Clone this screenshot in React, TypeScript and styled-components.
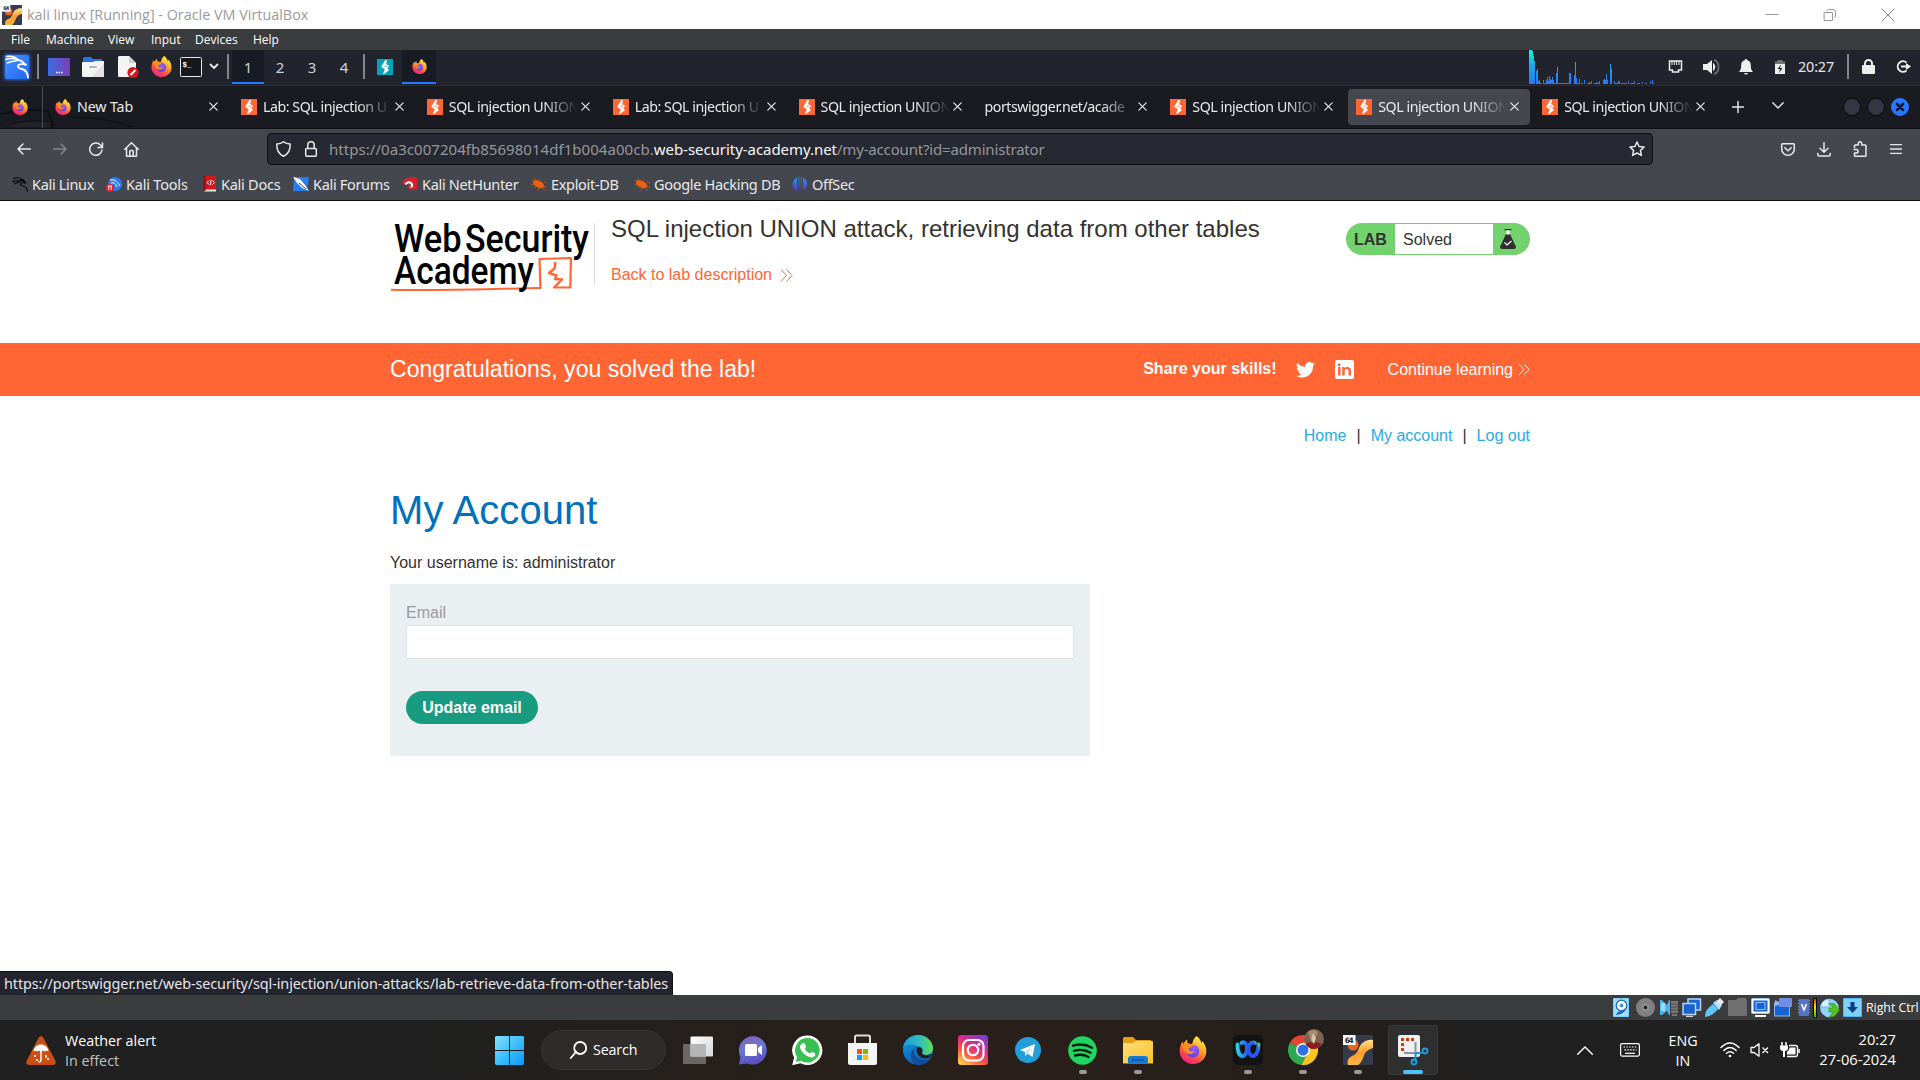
import React from 'react';
import styled, { createGlobalStyle, css } from 'styled-components';

const GlobalStyle = createGlobalStyle`
  * { box-sizing: border-box; }
  body { margin: 0; background: #fff; overflow: hidden; }
  svg { display: block; flex: none; overflow: visible; }
`;

const KALI = '"Noto Sans", sans-serif';
const WIN = '"Open Sans", "Noto Sans", sans-serif';
const PAGE = '"Liberation Sans", Arial, sans-serif';

const Desktop = styled.div`
  width: 1920px;
  height: 1080px;
  display: flex;
  flex-direction: column;
  overflow: hidden;
`;

const Row = styled.div`
  display: flex;
  align-items: center;
  flex: none;
  white-space: nowrap;
`;

const Item = styled.div<{ $ml?: number; $w?: number; $up?: number }>`
  flex: none;
  display: flex;
  align-items: center;
  margin-left: ${p => p.$ml ?? 0}px;
  margin-bottom: ${p => p.$up ?? 0}px;
  ${p => p.$w !== undefined && css`width: ${p.$w}px;`}
`;

/* ---------- host window ---------- */

const TitleBar = styled(Row)`
  height: 29px;
  padding-left: 2px;
  background: #fff;
  font: 14.4px ${WIN};
  color: #9b9b9b;
`;
const WindowTitle = styled.span`
  margin-left: 5px;
  letter-spacing: -0.01px;
`;
const WindowControls = styled.div`
  margin-left: auto;
  display: flex;
  align-items: center;
  gap: 46px;
  padding-right: 26px;
`;

const MenuBar = styled(Row)`
  height: 21px;
  padding: 0 0 0 11px;
  background: #3b3c3d;
  font: 12px ${WIN};
  color: #fff;
`;
const MenuEntry = styled.span<{ $w: number }>`
  width: ${p => p.$w}px;
`;

/* ---------- kali panel ---------- */

const Panel = styled(Row)`
  height: 36px;
  padding: 0 9px 2px 0;
  background: #22242d;
  border-bottom: 1px solid #2b2c31;
  font: 15px ${KALI};
  color: #cfd2d8;
`;
const Divider = styled.div<{ $ml: number }>`
  flex: none;
  width: 2px;
  height: 25px;
  margin-left: ${p => p.$ml}px;
  background: #85868b;
`;
const Workspace = styled.div<{ $active?: boolean; $w?: number }>`
  width: ${p => p.$w ?? 32}px;
  height: 34px;
  display: flex;
  align-items: center;
  justify-content: center;
  ${p => p.$active && css`
    background: #191b24;
    box-shadow: inset 0 -2px 0 #2777ff;
  `}
`;
const PanelRight = styled(Row)`
  margin-left: auto;
`;
const Clock = styled(Item)`
  font-size: 14.4px;
  letter-spacing: -0.15px;
  color: #e4e6ea;
`;

/* ---------- browser ---------- */

const TabStrip = styled(Row)`
  position: relative;
  height: 43px;
  background: #1a1b20;
  border-bottom: 1px solid #101114;
  padding-bottom: 1px;
`;
const Wallpaper = styled.svg`
  position: absolute;
  left: 0;
  bottom: 0;
`;
const PinnedTab = styled.div`
  position: relative;
  display: flex;
  align-items: center;
  width: 43px;
  height: 42px;
  padding-left: 12px;
  border-right: 1px solid #4b4c51;
  margin-right: 4px;
`;
const Tab = styled.div<{ $active?: boolean }>`
  position: relative;
  flex: none;
  width: 182px;
  height: 36px;
  margin-right: 3.9px;
  padding: 0 11px 0 8px;
  display: flex;
  align-items: center;
  gap: 6px;
  border-radius: 4px;
  background: ${p => (p.$active ? '#44474e' : 'transparent')};
`;
const TabLabel = styled.span<{ $fade?: boolean }>`
  flex: 1;
  min-width: 0;
  font: 14.2px/22px ${KALI};
  letter-spacing: ${p => (p.$fade ? -0.44 : -0.1)}px;
  color: #e9e9ea;
  margin-right: -3px;
  ${p => p.$fade && css`
    -webkit-mask-image: linear-gradient(90deg, #000 calc(100% - 34px), transparent);
    mask-image: linear-gradient(90deg, #000 calc(100% - 34px), transparent);
  `}
`;
const WindowDots = styled.div`
  margin-left: auto;
  display: flex;
  gap: 6px;
  padding-right: 11px;
`;
const Dot = styled.div<{ $close?: boolean }>`
  width: 18px;
  height: 18px;
  display: flex;
  align-items: center;
  justify-content: center;
  border-radius: 50%;
  border: 1px solid ${p => (p.$close ? '#2777ff' : '#0a0b0e')};
  background: ${p => (p.$close ? '#2777ff' : '#343846')};
`;

const NavBar = styled(Row)`
  height: 40px;
  padding-left: 17px;
  background: #44474e;
`;
const UrlBar = styled.div`
  width: 1386px;
  height: 32px;
  margin: 0 0 0 128px;
  padding: 0 7px 0 8px;
  display: flex;
  align-items: center;
  background: #272932;
  border: 1px solid #101116;
  border-radius: 4px;
  font: 15px ${KALI};
  color: #96979c;
`;
const UrlText = styled.span`
  width: 740px;
  margin-left: 12px;
  letter-spacing: 0.045px;
`;
const Host = styled.span`
  color: #f7f7f8;
  letter-spacing: -0.05px;
`;
const UrlPath = styled.span`
  letter-spacing: -0.17px;
`;
const BookmarkBar = styled(Row)`
  height: 32px;
  padding: 0 0 1px 12px;
  background: #44474e;
  border-bottom: 1px solid #0c0c10;
  font: 14.5px ${KALI};
  color: #e9e9ea;
`;
const Bookmark = styled.div<{ $w: number; $gap?: number; $ls?: number }>`
  width: ${p => p.$w}px;
  display: flex;
  align-items: center;
  gap: ${p => p.$gap ?? 4}px;
  letter-spacing: ${p => p.$ls ?? -0.32}px;
`;

/* ---------- page ---------- */

const Page = styled.main`
  position: relative;
  height: 794px;
  flex: none;
  background: #fff;
  font: 16px/20px ${PAGE};
  color: #333332;
`;
const Container = styled.div`
  width: 1140px;
  margin: 0 auto;
`;
const LabHeader = styled(Container)`
  height: 142px;
  display: flex;
  align-items: flex-start;
`;
const Logo = styled.div`
  margin: 15px 0 0 -2px;
  width: 205px;
`;
const HeaderRule = styled.div`
  width: 1px;
  height: 62px;
  margin: 22px 16px 0 1px;
  background: #dcdcdc;
`;
const LabTitle = styled.h2`
  margin: 14px 0 22px;
  font: 400 24px/28px ${PAGE};
  color: #333332;
`;
const BackLink = styled.a`
  display: flex;
  align-items: center;
  gap: 8px;
  color: #ff6633;
`;
const StatusPill = styled.div`
  margin: 22px 0 0 auto;
  width: 184px;
  height: 32px;
  display: flex;
  align-items: center;
  border-radius: 16px;
  background: #71d26e;
  padding-left: 8px;
`;
const PillTag = styled.b`
  width: 41px;
  padding-top: 2px;
`;
const PillState = styled.span`
  width: 98px;
  height: 30px;
  padding-left: 8px;
  line-height: 31px;
  background: #fff;
  margin-right: 7px;
`;
const Banner = styled.section`
  height: 53px;
  background: #ff6633;
  color: #fff;
`;
const BannerInner = styled(Container)`
  height: 53px;
  display: flex;
  align-items: center;
`;
const Congrats = styled.h4`
  margin: 0;
  font: 400 23.04px/27px ${PAGE};
`;
const Share = styled.b`
  margin: 0 19px 2px auto;
`;
const Continue = styled.a`
  display: flex;
  align-items: center;
  gap: 5px;
  margin-left: 34px;
`;
const TopLinks = styled(Container)`
  display: flex;
  justify-content: flex-end;
  gap: 10px;
  padding-top: 30px;
`;
const TopLink = styled.a`
  color: #29abe2;
`;
const Heading = styled.h1`
  margin: 40px 0 19px;
  font: 400 40px/48px ${PAGE};
  letter-spacing: 0.08px;
  color: #0071bc;
`;
const Username = styled.p`
  margin: 0 0 11px;
`;
const Form = styled.form`
  width: 700px;
  height: 172px;
  padding: 19px 16px;
  background: #eaeff2;
`;
const Label = styled.label`
  display: block;
  color: #999;
`;
const Input = styled.input`
  display: block;
  width: 100%;
  height: 34px;
  margin: 2px 0 32px;
  border: 1px solid #e0e2e3;
  background: #fff;
`;
const Submit = styled.button`
  display: block;
  width: 132px;
  height: 33px;
  padding: 0;
  border: 0;
  border-radius: 16.5px;
  background: #189b80;
  color: #fff;
  font: 700 16px/33px ${PAGE};
`;
const LinkStatus = styled.div`
  position: absolute;
  left: 0;
  bottom: 0;
  width: 673px;
  height: 24px;
  padding-left: 4px;
  border: solid #101116;
  border-width: 1px 1px 0 0;
  border-radius: 0 4px 0 0;
  background: #22242e;
  font: 14.4px/24px ${KALI};
  letter-spacing: -0.09px;
  color: #e6e6e8;
  white-space: nowrap;
`;

/* ---------- virtualbox status + taskbar ---------- */

const VmStatus = styled(Row)`
  height: 25px;
  justify-content: flex-end;
  background: #3b3c3e;
  padding-right: 2px;
  font: 12.4px ${WIN};
  letter-spacing: -0.05px;
  color: #fff;
`;
const Meter = styled.div`
  width: 4px;
  height: 20px;
  margin: 0 3px;
  border: 1px solid #000;
  background: linear-gradient(#ff2a00, #ffe000 45%, #22d000);
`;
const Taskbar = styled(Row)`
  height: 60px;
  background: linear-gradient(90deg, #202020 22%, #261f1a 42%, #2a201b 55%, #251e1a 65%, #202020 78%);
  font: 14.3px/20px ${WIN};
  color: #fff;
`;
const TwoLines = styled.div<{ $align?: string; $ml?: number; $w?: number; $top?: number }>`
  display: flex;
  flex-direction: column;
  text-align: ${p => p.$align ?? 'left'};
  margin-left: ${p => p.$ml ?? 0}px;
  padding-top: ${p => p.$top ?? 0}px;
  ${p => p.$w && css`width: ${p.$w}px;`}
`;
const Muted = styled.span`
  color: #c0c0c0;
`;
const SearchBox = styled.div`
  width: 125px;
  height: 40px;
  margin: 0 4.5px 0 17px;
  padding-left: 28px;
  display: flex;
  align-items: center;
  gap: 6px;
  border-radius: 20px;
  border: 1px solid #363432;
  background: #2d2c2a;
  letter-spacing: -0.15px;
`;
const AppButton = styled.div<{ $state?: 'open' | 'active' }>`
  position: relative;
  width: 50px;
  height: 50px;
  margin: 0 2.5px;
  display: flex;
  align-items: center;
  justify-content: center;
  border-radius: 4px;
  ${p => p.$state === 'active' && css`
    background: #2f2f30;
    box-shadow: inset 0 0 0 1px #3a3a3b;
  `}
  ${p => p.$state && css`
    &::after {
      content: '';
      position: absolute;
      bottom: 1px;
      width: ${p.$state === 'active' ? 20 : 8}px;
      height: 4px;
      border-radius: 2px;
      background: ${p.$state === 'active' ? '#4cc2ff' : '#9a9a9a'};
    }
  `}
`;
const TrayClock = styled(TwoLines)`
  margin-left: auto;
  padding-right: 24px;
  padding-bottom: 2px;
  font-size: 14.7px;
`;

/* ---------- icons ---------- */

const Line = ({ w, h, d, c = '#e9e9ea', sw = 1.5 }: { w: number; h: number; d: string; c?: string; sw?: number }) => (
  <svg width={w} height={h} viewBox={`0 0 ${w} ${h}`} fill="none" stroke={c} strokeWidth={sw} strokeLinecap="round" strokeLinejoin="round">
    <path d={d} />
  </svg>
);

const Firefox = ({ s }: { s: number }) => (
  <svg width={s} height={s} viewBox="0 0 32 32">
    <defs>
      <linearGradient id="ffBody" x1="0.8" y1="0" x2="0.25" y2="1">
        <stop offset="0.1" stopColor="#ffe43f" />
        <stop offset="0.45" stopColor="#ff9a26" />
        <stop offset="0.72" stopColor="#ff4a4c" />
        <stop offset="1" stopColor="#ec1a8c" />
      </linearGradient>
      <radialGradient id="ffGlobe" cx="0.6" cy="0.3" r="0.8">
        <stop offset="0" stopColor="#9a5cff" />
        <stop offset="1" stopColor="#5a3fd0" />
      </radialGradient>
    </defs>
    <path fill="url(#ffBody)" d="M20 0c3 2 5 5 5.500 8 1-.5 1.200-1.500 1-2.500 3 3.500 5 8 4.800 12.500C31 26 24.500 32 16 32 7.500 32 .8 25.500.8 17.500.8 12.500 2 9 4.200 6c0 1.200.2 2 .8 3C6 7 8 4.500 9.500 4c-.5 1.800 0 3.500 1 4.500 2 0 3.200.2 4.500 1C15.500 6 17 2.500 20 0z" />
    <circle cx="16" cy="17.500" r="7.200" fill="url(#ffGlobe)" />
    <path fill="#ff8d1f" d="M5 9c2.500-1 5-.8 6.500.2 2-.4 4 .4 4.800 1.500-.6 2-3 2.600-4.600 3-.8.900-.8 2.300.6 3.300 1.800 1 3.600 0 5.500.8-1.500 2.800-5.500 3.800-8.500 1.800C5.500 17.300 4.200 13 5 9z" />
  </svg>
);

const Bolt = ({ bg = '#ff6633' }: { bg?: string }) => (
  <svg width="16" height="16" viewBox="0 0 16 16">
    <rect width="16" height="16" fill={bg} />
    <path fill="#fff" d="M8.300 1H10L9.200 5.300 12.200 6.800 10.300 9.300 12 11 7.200 15H6L7.800 10.300 4.200 7.700z" />
    <path fill={bg} d="M8.200 6.300L10.200 7.300 9 8.600 7.200 7.700z" opacity="0.55" />
  </svg>
);

const Dragon = ({ w, h, c }: { w: number; h: number; c: string }) => (
  <svg width={w} height={h} viewBox="0 0 24 24" fill="none" stroke={c} strokeWidth="1.700" strokeLinecap="round">
    <path d="M2 4.500C6 2 11 2.500 14 5M1 8.500c4-2 8-1.500 12-1.200M4 12c2-2 4-3 7-3.200M13 6c3 .5 5 2 6.500 4.500-2-1-4-.8-6 0-2 1-1 3.500 2 4.200 4 .8 7 3 7.500 8.300" />
    <path d="M14 5.500c2.500.2 4 1.200 5 3" strokeWidth="2.600" />
  </svg>
);

const KaliMenu = () => (
  <svg width="34" height="34" viewBox="0 0 34 34">
    <defs>
      <linearGradient id="kali" x2="1" y2="1"><stop stopColor="#4a93ff" /><stop offset="1" stopColor="#1f66f0" /></linearGradient>
      <filter id="glow" x="-30%" y="-30%" width="160%" height="160%"><feGaussianBlur stdDeviation="1.600" /></filter>
    </defs>
    <rect x="4" y="4" width="26" height="26" rx="3" fill="#2777ff" opacity="0.8" filter="url(#glow)" />
    <rect x="5" y="5" width="24" height="24" rx="2" fill="url(#kali)" />
    <g fill="none" stroke="#fff" strokeWidth="1.500" strokeLinecap="round">
      <path d="M7 6.500c4-.5 8 .5 11 3M6 9.500c4-1.500 8-1 12 .5M7.500 13c2.500-1.500 5-2 8.500-2" />
      <path d="M17 10c3 0 5 .5 7 3.500l2.500 1.500c-3-1-6-1.500-8 0-1.500 2 .5 3.500 3.500 4 3.500.8 5.500 3 6 8.500" strokeWidth="1.900" />
    </g>
  </svg>
);

const Chevrons = ({ c, w = 13, h = 13 }: { c: string; w?: number; h?: number }) => (
  <svg width={w} height={h} viewBox="0 0 13 13" fill="none" stroke={c} strokeWidth="1"><path d="M1 .5l5.500 6L1 12.500M6.500.5l5.500 6-5.500 6" /></svg>
);

const VBox = ({ s }: { s: number }) => (
  <svg width={s} height={s} viewBox="0 0 30 30">
    <defs><linearGradient id="vb" x1="1" y2="1"><stop stopColor="#ffe08a" /><stop offset="0.5" stopColor="#ff9d2a" /><stop offset="1" stopColor="#ffb648" /></linearGradient></defs>
    <rect width="30" height="30" rx="1" fill="#363b4b" />
    <circle cx="10" cy="10" r="5.500" fill="#f2621b" />
    <path d="M30 5v8c-4 1-7 3-9 7-1 4-3 8-6 10H5c-1-4 0-7 4-9 3-1 5-3 7-8 2-5 7-9 14-8z" fill="url(#vb)" />
    <rect width="12.500" height="10" fill="#fff" />
    <text x="1.800" y="8" fontFamily="DejaVu Sans" fontWeight="700" fontSize="7.500" fill="#222" textLength="9">64</text>
  </svg>
);

const bars: [number, number, number][] = [
  [0, 34, 3], [3, 33, 1], [4, 28, 1], [5, 23, 1], [7, 13, 1], [8, 15, 1], [9, 3, 1], [10, 4, 1], [11, 1, 2], [14, 4, 1], [15, 1, 2], [17, 4, 1], [18, 7, 1], [19, 3, 1], [20, 8, 1], [21, 5, 1],
  [22, 4, 1], [23, 7, 1], [24, 4, 1], [25, 1, 2], [27, 11, 1], [28, 17, 1], [29, 1, 11], [40, 11, 2], [45, 9, 1], [46, 22, 1], [47, 6, 1], [48, 1, 2], [50, 5, 1], [52, 1, 2], [55, 4, 1],
  [58, 1, 4], [60, 2, 1], [62, 3, 1], [65, 1, 5], [67, 2, 1], [70, 3, 1], [74, 4, 1], [75, 5, 1], [76, 4, 1], [77, 10, 1], [78, 4, 1], [81, 20, 1], [82, 15, 1], [85, 3, 1], [86, 1, 3],
  [89, 3, 2], [92, 1, 6], [99, 3, 1], [101, 1, 4], [105, 3, 1], [108, 1, 3], [113, 2, 1], [116, 1, 2], [121, 3, 1], [123, 4, 1], [124, 1, 1],
];
const CpuGraph = () => (
  <svg width="125" height="34">
    <defs><linearGradient id="cpu" gradientUnits="userSpaceOnUse" x1="0" y1="0" x2="0" y2="34"><stop stopColor="#00ffd9" /><stop offset="0.45" stopColor="#1fa5e8" /><stop offset="1" stopColor="#2777ff" /></linearGradient></defs>
    {bars.map(([x, h, w]) => <rect key={x} x={x} y={34 - h} width={w} height={h} fill="url(#cpu)" />)}
  </svg>
);

const Bug = () => (
  <svg width="16" height="16" viewBox="0 0 16 16">
    <path d="M1 4l4 2M3 2l3 3M0 9l4-1M3 12l3-2M9 3l1 2M13 6l3 1M12 13l2 2M8 12l-1 3M13 11h3" stroke="#c9571f" strokeWidth="0.700" />
    <path d="M2 5.500c2-2 5-1.500 7 0 2 .3 4 2.500 4.500 5-2 2.500-5 2-7 .5C3.500 10 1.500 8 2 5.500z" fill="#ef6110" />
  </svg>
);

const tabs: { label: string; icon?: 'ff' | 'ps'; fade?: boolean; active?: boolean }[] = [
  { label: 'New Tab', icon: 'ff' },
  { label: 'Lab: SQL injection U', icon: 'ps', fade: true },
  { label: 'SQL injection UNION', icon: 'ps', fade: true },
  { label: 'Lab: SQL injection U', icon: 'ps', fade: true },
  { label: 'SQL injection UNION', icon: 'ps', fade: true },
  { label: 'portswigger.net/acade', fade: true },
  { label: 'SQL injection UNION', icon: 'ps', fade: true },
  { label: 'SQL injection UNION', icon: 'ps', fade: true, active: true },
  { label: 'SQL injection UNION', icon: 'ps', fade: true },
];

const WsaLogo = () => (
  <svg width="205" height="80" viewBox="388 216 205 80">
    <g fill="none" stroke="#ff6633" strokeLinejoin="round">
      <path d="M540.500 288.500L539.500 259 571 258 570.300 287.500H554" strokeWidth="2.200" />
      <path d="M555.500 262l-1 6.500-5.500 4.500 7.500 2.500-1.500 3.500 7 .5L553.500 288" strokeWidth="2.400" />
      <path d="M391 289.700c50 1.500 100-1 150-1.700" strokeWidth="2" />
    </g>
    <g fontFamily="Roboto, sans-serif" fontWeight="500" fontSize="39" fill="#000">
      <text x="394" y="252" textLength="67.500" lengthAdjust="spacingAndGlyphs">Web</text>
      <text x="465" y="252" textLength="124" lengthAdjust="spacingAndGlyphs">Security</text>
      <text x="394" y="284" textLength="140" lengthAdjust="spacingAndGlyphs">Academy</text>
    </g>
  </svg>
);

/* ---------- sections ---------- */

const HostWindow = () => (
  <>
    <TitleBar>
      <VBox s={20} />
      <WindowTitle>kali linux [Running] - Oracle VM VirtualBox</WindowTitle>
      <WindowControls>
        <Line w={12} h={12} c="#999" sw={1} d="M0 5.500H12" />
        <Line w={12} h={12} c="#999" sw={1} d="M.5 3.500h8v8h-8zM3 1.500q.5-1 1.500-1h4.500q2.500 0 2.500 2.500v4q0 1-1 1.500" />
        <Line w={12} h={12} c="#888" sw={1} d="M0 0L12 12M12 0L0 12" />
      </WindowControls>
    </TitleBar>
    <MenuBar>
      <MenuEntry $w={35}>File</MenuEntry>
      <MenuEntry $w={62}>Machine</MenuEntry>
      <MenuEntry $w={43}>View</MenuEntry>
      <MenuEntry $w={44}>Input</MenuEntry>
      <MenuEntry $w={58}>Devices</MenuEntry>
      <MenuEntry $w={40}>Help</MenuEntry>
    </MenuBar>
  </>
);

const KaliPanel = () => (
  <Panel>
    <KaliMenu />
    <Divider $ml={3} />
    <Item $ml={9} $w={22}>
      <svg width="22" height="18"><defs><linearGradient id="desk" x2="1"><stop stopColor="#3c6ee6" /><stop offset="1" stopColor="#7a3fb5" /></linearGradient></defs><rect width="22" height="18" rx="1" fill="url(#desk)" /><path d="M8 14.500h1.500M10.500 14.500H12M13 14.500h1.500" stroke="#fff" strokeWidth="1.500" /></svg>
    </Item>
    <Item $ml={12} $w={22}>
      <svg width="22" height="20"><path d="M1 1.500q0-1.500 1.500-1.500H9l2 2h9v6H1z" fill="#2d6fe8" /><path d="M0 5h11l2-1h9v15q0 1-1 1H1q-1 0-1-1z" fill="#f4f4f5" /><path d="M22 6v14H10z" fill="#e2e2e4" /><rect x="7" y="9" width="8" height="2" rx="1" fill="#b5b5b8" /></svg>
    </Item>
    <Item $ml={14} $w={21}>
      <svg width="21" height="22"><path d="M1 0h10l7 7v14H1q-1 0-1-1V1z" fill="#f4f4f5" /><path d="M11 0v7h7z" fill="#cfcfd2" /><circle cx="15" cy="16.500" r="5.600" fill="#d3181f" /><path d="M12.500 19l5-5" stroke="#fff" strokeWidth="1.800" /></svg>
    </Item>
    <Item $ml={11.5} $w={21}><Firefox s={21} /></Item>
    <Item $ml={8.5} $w={22}>
      <svg width="22" height="20"><rect x="0.500" y="0.500" width="21" height="19" rx="1" fill="#17181c" stroke="#e8e8e8" /><text x="2.500" y="9.500" fontFamily="Liberation Mono" fontWeight="700" fontSize="7.500" fill="#fff">$_</text></svg>
    </Item>
    <Item $ml={8} $w={10}><Line w={8} h={5} sw={1.8} d="M.5 .5L4 4 7.500 .5" /></Item>
    <Divider $ml={7} />
    <Item $ml={3}>
      <Workspace $active>1</Workspace>
      <Workspace>2</Workspace>
      <Workspace>3</Workspace>
      <Workspace>4</Workspace>
    </Item>
    <Divider $ml={3} />
    <Item $ml={12} $w={16}><Bolt bg="#00a3b9" /></Item>
    <Item $ml={9}><Workspace $active $w={34}><Firefox s={15} /></Workspace></Item>
    <PanelRight>
      <CpuGraph />
      <Item $ml={14} $w={15}><svg width="15" height="14" fill="none" stroke="#eee" strokeWidth="1.500"><path d="M1.500 1h12v9h-3v2h-6v-2h-3z" /><path d="M4 1v4M6.300 1v4M8.600 1v4M11 1v4" strokeWidth="1" /></svg></Item>
      <Item $ml={20} $w={17}><svg width="17" height="16"><path d="M0 5h4l5-4v14l-5-4H0z" fill="#eee" /><path d="M10.500 4.500q3 3.500 0 7z" fill="#eee" stroke="#eee" /><path d="M11 1c6 1.500 6 12.500 0 14" fill="none" stroke="#66686f" strokeWidth="2" /></svg></Item>
      <Item $ml={18} $w={16}><svg width="16" height="16"><path d="M8 0q1.200 0 1.300 1.300C12 2 12.800 4 12.800 6c0 4 .7 5 2.200 7H1c1.500-2 2.200-3 2.200-7 0-2 .8-4 3.500-4.700Q6.800 0 8 0zM6 14h4q-.5 1.500-2 1.500T6 14z" fill="#eee" /></svg></Item>
      <Item $ml={21} $w={10}><svg width="10" height="14"><rect x="2.500" width="5" height="2" fill="#777" /><rect y="1.500" width="10" height="3" fill="#777" /><rect y="4" width="10" height="10" fill="#eee" /><path d="M6 4.500L2.500 9H5l-1 4 3.500-5H5z" fill="#22242d" /></svg></Item>
      <Clock $ml={13} $w={36}>20:27</Clock>
      <Divider $ml={13} />
      <Item $ml={13} $w={13}><svg width="13" height="15"><rect y="6" width="13" height="9" rx="1" fill="#eee" /><path d="M3 7V4.500a3.500 3.500 0 017 0V7" fill="none" stroke="#eee" strokeWidth="2" /></svg></Item>
      <Item $ml={21} $w={15}><svg width="15" height="13" fill="none" stroke="#eee" strokeWidth="2"><path d="M10.500 2.500A5.300 5.300 0 1010.500 10.500M5 6.500h6" /><path d="M10 3l5 3.500-5 3.500z" fill="#eee" stroke="none" /></svg></Item>
    </PanelRight>
  </Panel>
);

const Browser = () => (
  <>
    <TabStrip>
      <Wallpaper width="160" height="20" viewBox="0 0 160 20" fill="none" stroke="#101115">
        <path d="M0 6c20-5 34-5 48-3l6 17" strokeWidth="2" />
        <path d="M12 16c12-3 24-4 38-2l2 6H4z" fill="#222329" strokeWidth="1" />
        <path d="M70 9c26 0 46 4 62 10" strokeWidth="1.500" />
      </Wallpaper>
      <PinnedTab><Firefox s={16} /></PinnedTab>
      {tabs.map((t, i) => (
        <Tab key={i} $active={t.active}>
          {t.icon === 'ff' && <Firefox s={16} />}
          {t.icon === 'ps' && <Bolt />}
          <TabLabel $fade={t.fade}>{t.label}</TabLabel>
          <Line w={9} h={9} sw={1.2} d="M.8 .8L8.200 8.200M8.200 .8L.8 8.200" />
        </Tab>
      ))}
      <Item $ml={12}><Line w={12} h={12} sw={1.4} d="M6 .5V11.500M.5 6H11.500" /></Item>
      <Item $ml={28} $up={2}><Line w={12} h={7} sw={1.4} d="M.8 .8L6 6 11.200 .8" /></Item>
      <WindowDots>
        <Dot />
        <Dot />
        <Dot $close><Line w={8} h={8} c="#0b1430" sw={2.6} d="M1 1L7 7M7 1L1 7" /></Dot>
      </WindowDots>
    </TabStrip>
    <NavBar>
      <Line w={14} h={12} d="M13.300 6H1M6 1L1 6l5 5" />
      <Item $ml={22}><Line w={14} h={12} c="#85878c" d="M.7 6H13M8 1l5 5-5 5" /></Item>
      <Item $ml={22}><Line w={14} h={14} d="M13 8A6.200 6.200 0 1111.500 3L13.300 4.800M13.500 1v4.500H9" /></Item>
      <Item $ml={21}><Line w={15} h={15} d="M.8 7.200L7.500 .8 14.200 7.200M2.500 6v8.200h10V6M5.800 14V9.500q0-1 1-1h1.400q1 0 1 1V14" /></Item>
      <UrlBar>
        <Line w={15} h={16} d="M7.500 .8C9.500 2.600 12 3 14.200 3c.3 6-2 10-6.700 12.200C2.800 13 .5 9 .8 3 3 3 5.500 2.600 7.500 .8z" />
        <Item $ml={14}><Line w={12} h={16} d="M1.500 7.500h9q.8 0 .8.800v6q0 .9-.8.900h-9q-.8 0-.8-.9v-6q0-.8.800-.8zM2.800 7.500V4a3.200 3.200 0 016.400 0v3.500" /></Item>
        <UrlText>https://0a3c007204fb85698014df1b004a00cb.<Host>web-security-academy.net</Host><UrlPath>/my-account?id=administrator</UrlPath></UrlText>
        <Item $ml={560}><Line w={16} h={16} d="M8 1l2.100 4.500 4.900.6-3.600 3.400 1 4.900L8 12l-4.400 2.400 1-4.900L1 6.100l4.900-.6z" /></Item>
      </UrlBar>
      <Item $ml={128} $w={14}><Line w={14} h={13} d="M1.500.8h11q.8 0 .8.800V6a6.200 6.200 0 01-12.600 0V1.600q0-.8.800-.8zM3.800 4.800L7 7.800l3.200-3" /></Item>
      <Item $ml={22} $w={14}><Line w={14} h={15} d="M7 .8V10M3 6.300L7 10.200l4-3.900M.8 11.500v1q0 1.500 1.500 1.500h9.400q1.500 0 1.500-1.500v-1" /></Item>
      <Item $ml={22} $w={15}><Line w={15} h={16} d="M1.500 6.500V4.800q0-.8.800-.8h3V2.500a1.700 1.700 0 013.400 0V4h3.500q.8 0 .8.800v9.600q0 .8-.8.800H2.300q-.8 0-.8-.8V12h1.800a1.700 1.700 0 000-3.600H1" /></Item>
      <Item $ml={22} $w={12}><Line w={12} h={10} sw={1.3} d="M.5 .7H11.500M.5 5H11.500M.5 9.300H11.500" /></Item>
    </NavBar>
    <BookmarkBar>
      <Bookmark $w={94}><Dragon w={16} h={16} c="#08080a" />Kali Linux</Bookmark>
      <Bookmark $w={97} $ls={-0.2}>
        <svg width="16" height="16"><circle cx="9" cy="8" r="7" fill="#2b7bf0" /><path d="M4 4c4-1 7 1 10 6M5 7c3-1 5 1 6 4" stroke="#fff" fill="none" /><circle cx="4" cy="12" r="4" fill="#e1222b" /><path d="M2.800 10v4M5.200 10v4M2 10h4" stroke="#fff" strokeWidth="0.900" /></svg>
        Kali Tools
      </Bookmark>
      <Bookmark $w={90} $gap={3} $ls={-0.25}>
        <svg width="15" height="16"><rect x="1" width="12" height="14" fill="#d3181f" /><rect x="1" y="13.500" width="12" height="2" fill="#e8e8e8" /><rect x="0.500" width="2" height="15" fill="#8c1015" /><path d="M6 4.500L4 6.500l2 2M9.500 4.500l2 2-2 2M8.300 4L7.200 9" stroke="#fff" fill="none" /></svg>
        Kali Docs
      </Bookmark>
      <Bookmark $w={109}>
        <svg width="16" height="16"><path d="M1 1h15l-2 14H0z" fill="#257df0" /><path d="M0 1l7 2 5 6 4 6-7-3-5-5z" fill="#fff" /><path d="M6 7l7 6" stroke="#444" strokeWidth="1" /></svg>
        Kali Forums
      </Bookmark>
      <Bookmark $w={129}>
        <svg width="16" height="16"><path d="M8 1h7v13l-5-3z" fill="#d81e2c" /><path d="M1.500 7.500c1-4 7-5.500 10-2 2.500 3 1 6.500-2 6.500-2 0-2.500-2-1-3" fill="none" stroke="#d81e2c" strokeWidth="3.500" /><path d="M3.500 8.500c1-2.500 4.500-3 6-1 1.200 2 .5 3.500-1 3.500" fill="none" stroke="#fff" strokeWidth="2.200" /></svg>
        Kali NetHunter
      </Bookmark>
      <Bookmark $w={103}><Bug />Exploit-DB</Bookmark>
      <Bookmark $w={158}><Bug />Google Hacking DB</Bookmark>
      <Bookmark $w={80}>
        <svg width="16" height="16"><defs><linearGradient id="off" x2="0" y2="1"><stop stopColor="#16a5d8" /><stop offset="1" stopColor="#5a35d8" /></linearGradient></defs><path d="M5 1.500v13C-.5 12-.5 4 5 1.500zM11 1.500v13c5.500-2.500 5.500-10.500 0-13zM6.500 1h.8v11l-.8 2zM8.800 1h.8v13l-.8-2z" fill="url(#off)" /></svg>
        OffSec
      </Bookmark>
    </BookmarkBar>
  </>
);

const LabPage = () => (
  <Page>
    <LabHeader>
      <Logo><WsaLogo /></Logo>
      <HeaderRule />
      <div>
        <LabTitle>SQL injection UNION attack, retrieving data from other tables</LabTitle>
        <BackLink>Back to lab description <Chevrons c="#ff6633" /></BackLink>
      </div>
      <StatusPill>
        <PillTag>LAB</PillTag>
        <PillState>Solved</PillState>
        <svg width="16" height="20"><path d="M6 5h4l6 13q0 2-2 2H2q-2 0-2-2z" fill="#2f2f2f" /><rect x="6.500" y="1" width="3.200" height="4.500" fill="#fff" /><path d="M4.500 .7h7" stroke="#2f2f2f" strokeWidth="1.200" /><path d="M4.500 13.500L7 16l4.500-4" stroke="#fff" fill="none" strokeWidth="1.200" /></svg>
      </StatusPill>
    </LabHeader>
    <Banner>
      <BannerInner>
        <Congrats>Congratulations, you solved the lab!</Congrats>
        <Share>Share your skills!</Share>
        <svg width="19" height="16" viewBox="0 0 24 20"><path fill="#fff" d="M24 2.370a9.800 9.800 0 01-2.830.77A4.900 4.900 0 0023.340.42a9.900 9.900 0 01-3.130 1.200A4.920 4.920 0 0011.820 6.100 14 14 0 011.670.950a4.920 4.920 0 001.520 6.570 4.900 4.900 0 01-2.230-.620v.06a4.930 4.930 0 003.950 4.830 5 5 0 01-2.220.080 4.930 4.930 0 004.600 3.420A9.900 9.900 0 010 17.330a14 14 0 007.550 2.210c9.050 0 14-7.500 14-14 0-.21 0-.42-.02-.63A10 10 0 0024 2.370z" /></svg>
        <Item $ml={20}><svg width="19" height="19"><rect width="19" height="19" rx="2" fill="#fff" /><path d="M3 7h2.500v8.500H3zM3 3.500h2.500V6H3zM7.200 7h2.400v1.200C11.500 6 16 6.500 16 10.500v5h-2.500v-4.700c0-2.500-3.800-2.500-3.800 0v4.700H7.200z" fill="#ff6633" /></svg></Item>
        <Continue>Continue learning <Chevrons c="#fff" w={12} /></Continue>
      </BannerInner>
    </Banner>
    <TopLinks>
      <TopLink>Home</TopLink>
      <span>|</span>
      <TopLink>My account</TopLink>
      <span>|</span>
      <TopLink>Log out</TopLink>
    </TopLinks>
    <Container>
      <Heading>My Account</Heading>
      <Username>Your username is: administrator</Username>
      <Form>
        <Label>Email</Label>
        <Input />
        <Submit type="button">Update email</Submit>
      </Form>
    </Container>
    <LinkStatus>https://portswigger.net/web-security/sql-injection/union-attacks/lab-retrieve-data-from-other-tables</LinkStatus>
  </Page>
);

const VmStatusBar = () => (
  <VmStatus>
    <svg width="16" height="19"><rect width="16" height="19" rx="1" fill="#7fd0fb" /><rect x="1" y="1" width="14" height="17" fill="#a5dcfc" /><circle cx="8.500" cy="7.500" r="5.300" fill="#fff" stroke="#1767b8" strokeWidth="1.200" /><circle cx="8.500" cy="7.500" r="1.800" fill="#2a8be0" /><path d="M13 10q-1 6-10 7 1-4 6-4z" fill="#1767b8" /></svg>
    <Item $ml={7}><svg width="19" height="19"><circle cx="9.500" cy="9.500" r="9.500" fill="#808080" /><circle cx="9.500" cy="9.500" r="4" fill="#8e8e8e" /><circle cx="9.500" cy="9.500" r="1.800" fill="#222" /></svg></Item>
    <Item $ml={5}><svg width="18" height="19"><path d="M0 2h2l5 5 2-5h1v15H9l-2-4-5 4H0z" fill="#4cb4f5" /><path d="M1 5h4v8H1z" fill="#9bdcff" /><path d="M11 3h7v12h-7zM12 16h5v2h-5z" fill="#777" /><path d="M11 6h7M11 9h7M11 12h7" stroke="#555" /></svg></Item>
    <Item $ml={4}><svg width="19" height="19"><rect x="6" y="1" width="12.500" height="11" fill="#1767d8" stroke="#b9d4f5" strokeWidth="1.500" /><rect x="1" y="5.500" width="12.500" height="11" fill="#1763d0" stroke="#b9d4f5" strokeWidth="1.500" /><path d="M4 18.300h7" stroke="#fff" /></svg></Item>
    <Item $ml={4}><svg width="19" height="19"><path d="M0 19c0-6 3-9 8-13l5 5c-4 5-7 7-13 8z" fill="#5fc5fa" /><path d="M8 5l4-3 5 5-3 5z" fill="#b2e2fc" /><path d="M12 3l3-3 4 4-3 3z" fill="#eee" /></svg></Item>
    <Item $ml={4}><svg width="19" height="19"><path d="M0 2h8l2-2h8v2h1v16H0z" fill="#707070" /></svg></Item>
    <Item $ml={4}><svg width="19" height="19"><rect x="0.500" y="0.500" width="18" height="15" rx="1" fill="#fff" stroke="#9fc4ee" /><rect x="2.500" y="2.500" width="14" height="11" fill="#1663d3" /><rect x="5" y="4.500" width="9" height="7" fill="none" stroke="#8fc3ff" /><path d="M4 18h11" stroke="#fff" strokeWidth="2" /></svg></Item>
    <Item $ml={4}><svg width="19" height="19"><rect x="0.500" y="5" width="15" height="13" fill="#1663d3" stroke="#8fb9ec" /><rect x="5" width="13" height="9" rx="1" fill="#6f8ce6" /><path d="M1 2l4 2v3L1 8z" fill="#9db2f2" /></svg></Item>
    <Item $ml={5}><svg width="12" height="19"><path d="M0 2.500h12M0 5.500h12M0 8.500h12M0 11.500h12M0 14.500h12" stroke="#8c9fe0" /><rect x="1" y="1" width="10" height="17" fill="#5672c8" /><path d="M3.500 6L6 12l2.500-6" stroke="#fff" strokeWidth="1.600" fill="none" /></svg></Item>
    <Meter />
    <svg width="20" height="20"><circle cx="9.500" cy="10" r="9.300" fill="#8fd5fb" /><path d="M9 1v8H.5C1 4 5 1 9 1z" fill="#d5f1ff" stroke="#4da5e0" strokeWidth="0.700" /><path d="M9 5.500h5l5.500 6.500-5.500 6.500H9.500l4-4.500H9v-4h4.500z" fill="#52c41e" stroke="#2f8f10" strokeWidth="0.700" /></svg>
    <Item $ml={3}><svg width="19" height="19"><rect width="19" height="19" rx="1" fill="#4fb5f6" /><rect x="1" y="1" width="17" height="17" fill="#7fd0fb" /><path d="M7.500 4h4v5h3.500l-5.500 6L4 9h3.500z" fill="#0c3f80" /></svg></Item>
    <Item $ml={4} $w={52}>Right Ctrl</Item>
  </VmStatus>
);

const TaskbarRow = () => (
  <Taskbar>
    <Item $ml={26} $w={30}><svg width="30" height="29"><path d="M12.500 2q2.500-4 5 0l12 23q1 4-3 4h-23q-4 0-3-4z" fill="#c94f14" /><path d="M7.500 15.500C8 6 22 6 22.500 15.500q-2-1.500-3.700 0-2-1.500-3.800 0-1.800-1.500-3.700 0-1.800-1.500-3.800 0z" fill="#fff" /><path d="M15 15v9q-.5 2.500-2.500 1.500M9 19v2M11 23v2M20 19v3M22 22v2" stroke="#fff" fill="none" strokeWidth="1.500" /></svg></Item>
    <TwoLines $ml={9} $w={101} $top={2}><span>Weather alert</span><Muted>In effect</Muted></TwoLines>
    <Item $ml={329} $w={29}>
      <svg width="29" height="29"><defs><linearGradient id="win" x2="1" y2="1"><stop stopColor="#8be0fc" /><stop offset="0.500" stopColor="#3bc0fb" /><stop offset="1" stopColor="#0d97f8" /></linearGradient></defs><path d="M1 0h13v14H0V1zM15 0h13l1 1v13H15zM0 15h14v14H1l-1-1zM15 15h14v13l-1 1H15z" fill="url(#win)" /></svg>
    </Item>
    <SearchBox><Line w={17} h={18} c="#fff" sw={1.8} d="M6.200 10.700L.8 17M16.200 7a6 6 0 11-12 0 6 6 0 0112 0z" />Search</SearchBox>
    <AppButton>
      <svg width="30" height="28"><defs><linearGradient id="tv" x2="1" y2="1"><stop stopColor="#fff" /><stop offset="1" stopColor="#d5d5d5" /></linearGradient></defs><rect y="8" width="23" height="20" rx="1" fill="#686868" /><rect x="7.500" y="0.500" width="22.500" height="20" rx="1" fill="url(#tv)" /><rect x="7.500" y="8" width="15.500" height="12.500" fill="#b5b5b5" /></svg>
    </AppButton>
    <AppButton>
      <svg width="30" height="29"><defs><linearGradient id="chat" x2="0.300" y2="1"><stop stopColor="#7f5fa8" /><stop offset="0.500" stopColor="#6b78d8" /><stop offset="1" stopColor="#5a52c0" /></linearGradient></defs><path d="M15 0a14.300 14.300 0 11-6 27.500L1 28.500 2.500 21A14.300 14.300 0 0115 0z" fill="url(#chat)" /><rect x="7" y="8" width="12" height="12" rx="1.500" fill="#fff" /><path d="M20 12l4-3v10l-4-3z" fill="#fff" /></svg>
    </AppButton>
    <AppButton>
      <svg width="32" height="31"><path d="M15.500 .5a14.800 14.800 0 11-7 27.800L.2 30.300 2.100 22.500A14.800 14.800 0 0115.500 .5z" fill="#fff" /><path d="M15.500 3a12.300 12.300 0 11-6.500 22.800L3.800 27 5.100 22A12.300 12.300 0 0115.500 3z" fill="#38c152" /><path d="M11 8c1-.3 1.500 0 2 1l1 2.500c.2.800-.9 1.700-1.200 2.200 1.200 2.300 3 3.800 5.200 4.700.6-.5 1.300-1.800 2-1.600l3 1.500c.6.500.3 2.200-.5 3-1.500 1.500-4 1.500-7 0-4-2-6.500-5.500-7.300-8C7.500 11 9 8.600 11 8z" fill="#fff" /></svg>
    </AppButton>
    <AppButton>
      <svg width="30" height="30"><path d="M7 9V2q0-1.500 1.500-1.500h12Q22 .5 22 2v7" fill="none" stroke="#ddd" strokeWidth="2" /><path d="M0 8h29v20q0 2-2 2H2q-2 0-2-2z" fill="#f4f4f4" /><path d="M9 14h5v5H9z" fill="#f25022" /><path d="M15 14h5v5h-5z" fill="#7fba00" /><path d="M9 20h5v5H9z" fill="#00a4ef" /><path d="M15 20h5v5h-5z" fill="#ffb900" /></svg>
    </AppButton>
    <AppButton>
      <svg width="30" height="30"><defs><linearGradient id="edgeTop" x2="1"><stop stopColor="#1b9de2" /><stop offset="0.600" stopColor="#35c1b8" /><stop offset="1" stopColor="#5fe04a" /></linearGradient><linearGradient id="edgeLow" x2="0.300" y2="1"><stop stopColor="#1aa0e8" /><stop offset="1" stopColor="#0a5fb8" /></linearGradient></defs><circle cx="15" cy="15" r="15" fill="url(#edgeLow)" /><path d="M0 13C1 5 8 0 15 0c9 0 15 7 15 13 0 5-4 7-7 7s-5-1-4-3c2-2 0-6-5-6C8 8 3 9 0 13z" fill="url(#edgeTop)" /><path d="M14 11c-6 4-3 14 8 14 3 0 5-1 6-2-3 5-8 7-13 7-8-2-10-14-1-19z" fill="#104e98" /><path d="M14 12c6-1 6 5 5 6 0 2 5 3 10 1-1 4-5 5-8 4-5 0-9-6-7-11z" fill="#241e1b" /></svg>
    </AppButton>
    <AppButton>
      <svg width="30" height="30"><defs><linearGradient id="ig" x1="0.200" y1="1" x2="0.800" y2="0"><stop stopColor="#ffc84a" /><stop offset="0.350" stopColor="#fb5245" /><stop offset="0.650" stopColor="#d42a8f" /><stop offset="1" stopColor="#7a3fd0" /></linearGradient></defs><rect width="30" height="30" rx="3" fill="url(#ig)" /><g fill="none" stroke="#fff" strokeWidth="2.200"><rect x="5" y="5" width="20.500" height="20.500" rx="6" /><circle cx="15" cy="15" r="5.200" /></g><circle cx="21" cy="9.300" r="1.500" fill="#fff" /></svg>
    </AppButton>
    <AppButton>
      <svg width="26" height="26"><circle cx="13" cy="13" r="13" fill="#229ed9" /><path d="M5 13L20 7l-2.500 13-5-3.500-2.500 2.500v-4z" fill="#fff" /><path d="M10 15l7-5.500-4.500 7z" fill="#b9dcf0" /></svg>
    </AppButton>
    <AppButton $state="open">
      <svg width="30" height="29"><circle cx="14.500" cy="14.500" r="14.300" fill="#1ed760" /><path d="M5 9.700q10-3 19 2M6 14.800q9-2.500 16.500 2M7 19.500q7.500-2 13.500 1.500" stroke="#0c1a10" fill="none" strokeWidth="2.400" strokeLinecap="round" /></svg>
    </AppButton>
    <AppButton $state="open">
      <svg width="30" height="27"><defs><linearGradient id="fold" x2="1" y2="1"><stop stopColor="#ffdf77" /><stop offset="1" stopColor="#fbc02d" /></linearGradient></defs><path d="M0 1.500Q0 0 1.500 0H10l3 3h15v6H0z" fill="#e2a015" /><path d="M0 7q0-1 1-1h9l3-2h16q1 0 1 1v21.500H0z" fill="url(#fold)" /><path d="M5 26.500V22q0-3 3-3h14q3 0 3 3v4.500z" fill="#1579cf" /><path d="M9 23h12" stroke="#0a4e92" strokeWidth="1.300" /></svg>
    </AppButton>
    <AppButton><Firefox s={28} /></AppButton>
    <AppButton $state="open">
      <svg width="30" height="30"><defs><linearGradient id="wxL" x2="1"><stop stopColor="#1fd0e8" /><stop offset="1" stopColor="#2a5ff5" /></linearGradient><linearGradient id="wxR" x2="1" y1="1" y2="0"><stop stopColor="#2a4ff0" /><stop offset="0.700" stopColor="#2a5ff5" /><stop offset="1" stopColor="#4fd07a" /></linearGradient></defs><rect width="30" height="30" rx="5" fill="#131313" /><path d="M4.500 9.500c0 7 2 11.500 5 11.500s5-4 4.500-9c-.4-4-3.500-6-5.500-4" fill="none" stroke="url(#wxL)" strokeWidth="3.800" strokeLinecap="round" /><path d="M25.500 9.500c0 7-2.500 11.500-5.500 11.500s-4.800-4-4.500-8c.5-5 4-6.500 6.500-5" fill="none" stroke="url(#wxR)" strokeWidth="3.800" strokeLinecap="round" /></svg>
    </AppButton>
    <AppButton $state="open">
      <svg width="30" height="30"><path d="M15 15L2 7.500a15 15 0 0126 0z" fill="#ea4335" /><path d="M2 7.500A15 15 0 0013.500 30L21 18.500 15 15z" fill="#2da94f" /><path d="M28 7.500A15 15 0 0113.500 30L20 18l-5-10.500z" fill="#fcc31e" /><circle cx="15" cy="15" r="7" fill="#fff" /><circle cx="15" cy="15" r="5.500" fill="#2f6fe8" /><circle cx="26" cy="4" r="10" fill="#7d6450" /><path d="M20-3q5-4 10 0l-2 5-6 2z" fill="#a98a6a" /><path d="M17.500 9q4-3 7-1 4-2 9 1-3 5-8 5-5 0-8-5z" fill="#8c1c22" /><path d="M25-2l3 5-2 6-3-4z" fill="#d9c3ab" /></svg>
    </AppButton>
    <AppButton $state="open"><VBox s={30} /></AppButton>
    <AppButton $state="active">
      <svg width="30" height="30"><rect width="22" height="22" rx="2" fill="#f0f0f0" /><path d="M4.500 16V4.500H16" fill="none" stroke="#d83b01" strokeWidth="3" strokeDasharray="3 2" /><path d="M17.500 7v12M6 18h14" stroke="#8a949c" strokeWidth="2" /><path d="M18 18h6M17.500 18v6" stroke="#1f95d8" strokeWidth="2.200" /><circle cx="27" cy="16" r="2.500" fill="none" stroke="#1f9fe0" strokeWidth="1.800" /><circle cx="16" cy="27" r="2.500" fill="none" stroke="#1f9fe0" strokeWidth="1.800" /></svg>
    </AppButton>
    <Item $ml={136.5} $w={16}><Line w={16} h={9} c="#fff" sw={1.4} d="M.7 8.300L8 1l7.300 7.300" /></Item>
    <Item $ml={27} $w={20}><svg width="20" height="14" fill="none" stroke="#fff" strokeWidth="1.200"><rect x="0.600" y="0.600" width="18.800" height="12.500" rx="1.500" /><path d="M3.500 4h13M4.500 6.800h12" strokeDasharray="1.500 1.300" /><path d="M5 10.300h10" /></svg></Item>
    <TwoLines $align="center" $ml={27} $w={32} $top={1}><span>ENG</span><span>IN</span></TwoLines>
    <Item $ml={21} $w={20}><svg width="20" height="16" fill="none" stroke="#fff" strokeWidth="1.500" strokeLinecap="round"><path d="M1 5.500q9-9 18 0M3.800 8.500q6.200-6 12.400 0M6.500 11.300q3.500-3 7 0" /><circle cx="10" cy="14" r="1.300" fill="#fff" stroke="none" /></svg></Item>
    <Item $ml={10} $w={19}><svg width="19" height="14" fill="none" stroke="#fff" strokeWidth="1.300" strokeLinejoin="round"><path d="M1 4.500h3L9 .8v12.400L4 9.500H1zM12.500 4.500l5.500 5.500M18 4.500L12.500 10" /></svg></Item>
    <Item $ml={11} $w={20}><svg width="20" height="16"><path d="M2 0v4M6 0v4" stroke="#fff" strokeWidth="1.500" /><path d="M0 3.500h8V6q0 2.500-3 3v6H3V9Q0 8.500 0 6z" fill="#fff" /><path d="M9 3.500h6.500q2 0 2 2v7q0 2-2 2H7" fill="none" stroke="#fff" strokeWidth="1.300" /><path d="M9.500 5.500h6v7H7v-3q2-.5 2.500-4z" fill="#fff" /><path d="M19 7v4" stroke="#fff" strokeWidth="1.500" /></svg></Item>
    <TrayClock $align="right"><span>20:27</span><span>27-06-2024</span></TrayClock>
  </Taskbar>
);

export default function App() {
  return (
    <Desktop>
      <GlobalStyle />
      <HostWindow />
      <KaliPanel />
      <Browser />
      <LabPage />
      <VmStatusBar />
      <TaskbarRow />
    </Desktop>
  );
}
